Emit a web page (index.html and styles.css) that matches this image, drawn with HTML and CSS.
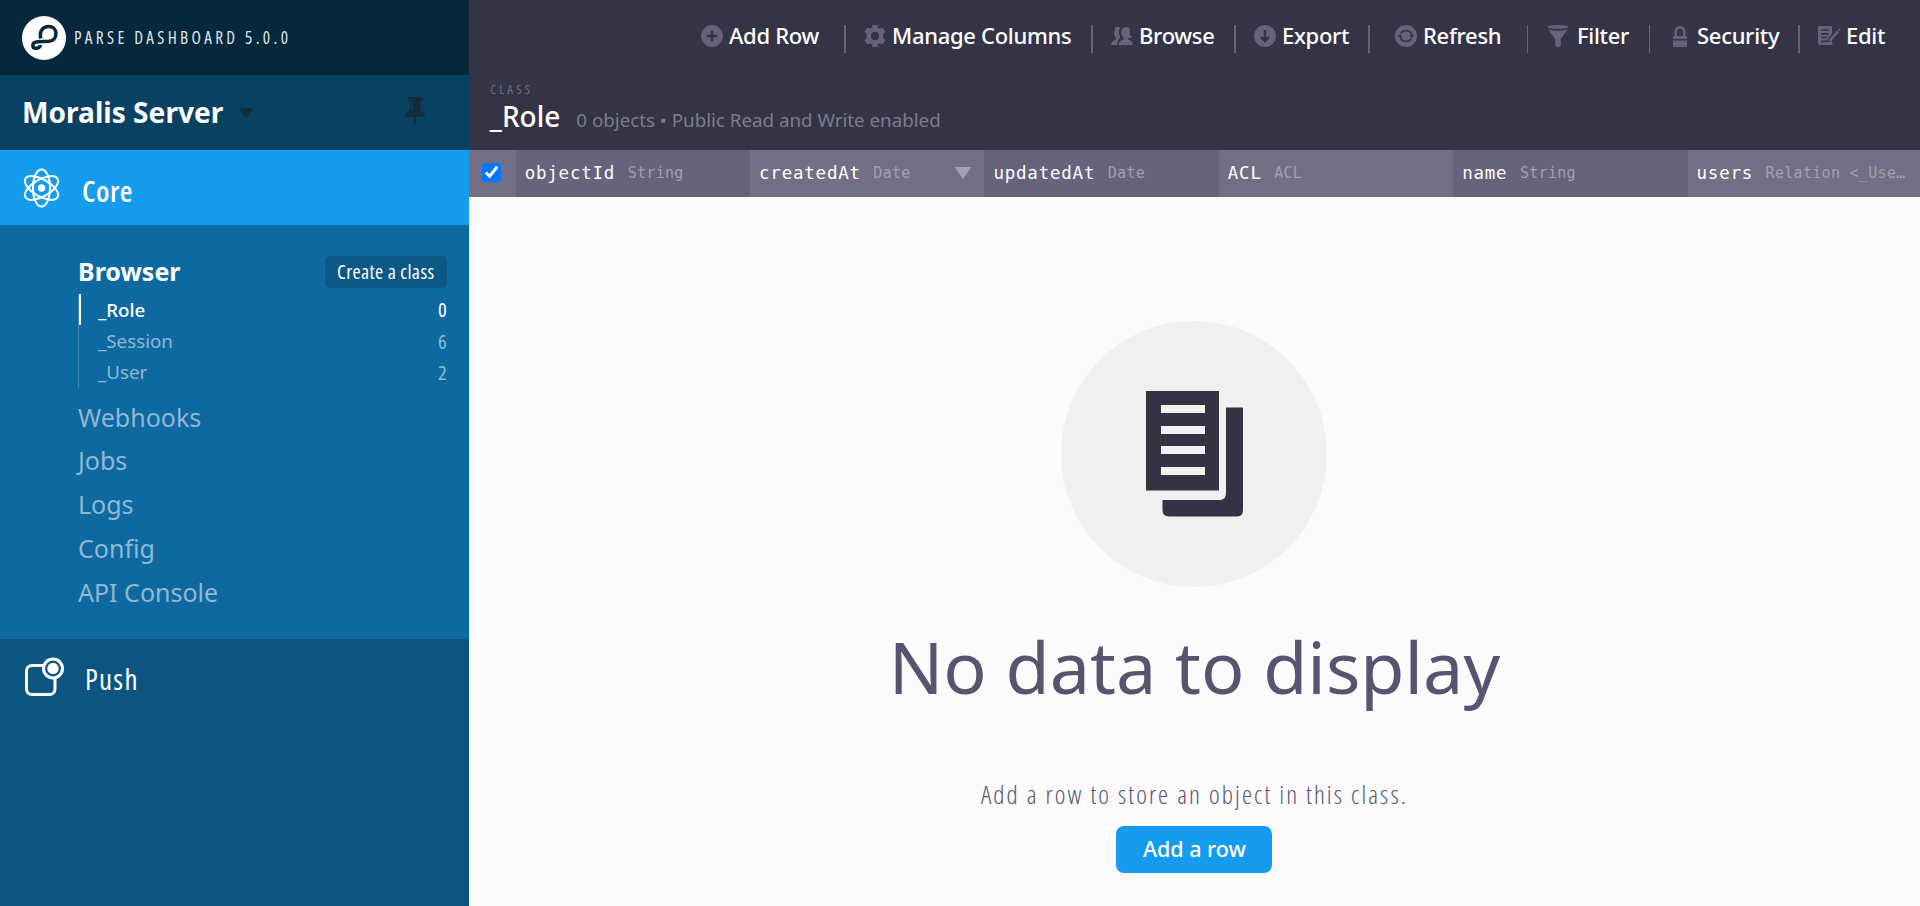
FILE: index.html
```html
<!DOCTYPE html>
<html lang="en">
<head>
<meta charset="utf-8">
<title>Parse Dashboard</title>
<link rel="stylesheet" href="styles.css">
</head>
<body>
<div class="app">
  <aside class="sidebar">
    <div class="brand">
      <svg class="brand-logo" viewBox="0 0 44 44"><circle cx="22" cy="22" r="22" fill="#fff"/><path d="M18.800 22.500C17 15 21 10.500 26.500 10.500C31 10.500 34 13.500 34 17.500C34 22 31 25 27 25.300L16 25.800C12.500 26 10.800 27.500 10.800 29.500C10.800 31.300 12.200 32.300 14 32.300C16.500 32.300 18.300 31 18.300 29" fill="none" stroke="#05283c" stroke-width="3.500"/></svg>
      <span class="brand-name">PARSE DASHBOARD 5.0.0</span>
    </div>
    <div class="app-picker">
      <span class="app-name">Moralis Server</span>
      <svg class="caret" viewBox="0 0 14 10"><path d="M0 0H14L7 10Z" fill="#132c3c"/></svg>
      <svg class="pin" viewBox="0 0 20 29"><path d="M4 0H16Q18 0 18 2T16 4.300L15.500 4.500V13.500Q20 15 20 20H11.200L10.500 28.500H9.500L8.900 20H0Q0 15 5 13.500V4.500Q2.500 4 2.500 2T4 0ZM6.500 5V13.500H8V5Z" fill="#132c3c" fill-rule="evenodd"/></svg>
    </div>
    <div class="section section-active">
      <svg class="section-icon" viewBox="0 0 36 40" fill="none" stroke="#fff" stroke-width="2"><circle cx="18" cy="20" r="3.700" fill="#fff" stroke="none"/><ellipse cx="18" cy="20" rx="8.600" ry="18.500"/><ellipse cx="18" cy="20" rx="8.600" ry="18.500" transform="rotate(60 18 20)"/><ellipse cx="18" cy="20" rx="8.600" ry="18.500" transform="rotate(-60 18 20)"/></svg>
      <span class="section-name">Core</span>
    </div>
    <nav class="menu">
      <div class="menu-item menu-current"><span>Browser</span><button class="create-class">Create a class</button></div>
      <div class="classes">
        <div class="class-row class-current"><span>_Role</span><span class="count">0</span></div>
        <div class="class-row"><span>_Session</span><span class="count">6</span></div>
        <div class="class-row"><span>_User</span><span class="count">2</span></div>
      </div>
      <div class="menu-item">Webhooks</div>
      <div class="menu-item">Jobs</div>
      <div class="menu-item">Logs</div>
      <div class="menu-item">Config</div>
      <div class="menu-item">API Console</div>
    </nav>
    <div class="section section-push">
      <svg class="section-icon" viewBox="0 0 39 40"><rect x="1.500" y="8.500" width="28.500" height="29" rx="5.500" fill="none" stroke="#fff" stroke-width="3"/><circle cx="28" cy="11.500" r="11" fill="#fff"/><circle cx="28" cy="11.500" r="6.800" fill="#fff" stroke="#0c5582" stroke-width="2.200"/></svg>
      <span class="section-name">Push</span>
    </div>
  </aside>
  <main class="content">
    <header class="header">
      <div class="toolbar">
        <div class="tool"><svg class="tool-icon" viewBox="0 0 22 22"><circle cx="11" cy="11" r="11"/><path class="cut" d="M11 5.500V16.500M5.500 11H16.500"/></svg><span>Add Row</span></div>
        <div class="tool"><svg class="tool-icon" viewBox="0 0 22 22"><path fill-rule="evenodd" d="M8.600 0H13.400L13.900 2.700L15.800 3.800L18.700 2.800L21.400 6.700L19.300 8.900V13.100L21.400 15.300L18.700 19.200L15.800 18.200L13.900 19.300L13.400 22H8.600L8.100 19.300L6.200 18.200L3.300 19.200L0.600 15.300L2.700 13.100V8.900L0.600 6.700L3.300 2.800L6.200 3.800L8.100 2.700ZM11 6.800A4.200 4.200 0 1 0 11 15.200A4.200 4.200 0 1 0 11 6.800Z"/></svg><span>Manage Columns</span></div>
        <div class="tool"><svg class="tool-icon" viewBox="0 0 22 22"><path d="M4 2.500Q6 1 9.500 2.500Q7 6 8.500 10Q9.500 12 9 13Q6.500 14.500 6.500 20H0Q0 16.500 5 14.500Q5.500 12.500 3.500 10.500Q2.500 7 3.700 5ZM11.500 3Q15 1 18.500 3Q19.500 6 18.500 9.500Q22 12 20 13H17L17.500 14.500Q22 16 22 20H7.500Q7.500 16 12.500 14.500V12.500Q10 10 10 7.500Z"/></svg><span>Browse</span></div>
        <div class="tool"><svg class="tool-icon" viewBox="0 0 22 22"><circle cx="11" cy="11" r="11"/><path class="cut" d="M11 5V15M7 12L11 16L15 12"/></svg><span>Export</span></div>
        <div class="tool tool-refresh"><svg class="tool-icon" viewBox="0 0 22 22"><circle cx="11" cy="11" r="11"/><path class="cut thin" d="M5.800 8.500A6 6 0 0 1 16.800 10M16.200 13.500A6 6 0 0 1 5.200 12"/><path class="hole" d="M14.300 10H19L16.900 13.200ZM3 12H7.700L5.100 8.800Z"/></svg><span>Refresh</span></div>
        <div class="tool tool-filter"><svg class="tool-icon" viewBox="0 0 22 22"><ellipse cx="11" cy="1.900" rx="10.500" ry="1.900"/><path d="M1.500 4.800Q11 6.500 20.500 4.800L13.800 14V21Q11 22.800 8.200 21V14Z"/></svg><span>Filter</span></div>
        <div class="tool tool-security"><svg class="tool-icon" viewBox="0 0 22 22"><path fill-rule="evenodd" d="M4 11H5.500V7Q5.500 1 11 1T16.500 7V11H18V14H4ZM8 11H14V7Q14 3.500 11 3.500T8 7ZM4 15.500H18V20.500Q18 22 16.500 22H5.500Q4 22 4 20.500Z"/></svg><span>Security</span></div>
        <div class="tool"><svg class="tool-icon" viewBox="0 0 22 22"><path d="M0 1H14V9L9 15V17H12L14 15V18L15 20H2Q0 20 0 18Z"/><path class="cut thin" d="M3 5H11M3 8.800H11M3 12.500H9M3 16.300H9"/><path d="M11 14.500L19 5.500L21 7.500L13 16L10.500 16.500ZM20 4.500L21 3.500L22.500 5L21.700 6.200Z"/></svg><span>Edit</span></div>
      </div>
      <div class="class-label">CLASS</div>
      <div class="title"><span class="class-name">_Role</span><span class="subtitle">0 objects • Public Read and Write enabled</span></div>
    </header>
    <div class="columns">
      <div class="check-cell"><input class="check" type="checkbox" checked></div>
      <div class="cell"><span>objectId</span><span class="type">String</span></div>
      <div class="cell cell-alt"><span>createdAt</span><span class="type">Date</span><svg class="sort" viewBox="0 0 18 13"><path d="M0 0H18L9 13Z" fill="#a1a2ad"/></svg></div>
      <div class="cell"><span>updatedAt</span><span class="type">Date</span></div>
      <div class="cell cell-alt"><span>ACL</span><span class="type">ACL</span></div>
      <div class="cell"><span>name</span><span class="type">String</span></div>
      <div class="cell cell-alt"><span>users</span><span class="type">Relation &lt;_Use…</span></div>
    </div>
    <div class="empty">
      <div class="empty-disc"><svg class="empty-icon" viewBox="0 0 97 126"><path fill="#343344" fill-rule="evenodd" d="M0 0H73V99.500H0ZM15 14V22H59V14ZM15 35V43H59V35ZM15 55V63H59V55ZM15 76V84H59V76ZM80 16.500H97V119Q97 125.500 91 125.500H23Q16.500 125.500 16.500 119V109H74Q80 109 80 102Z"/></svg></div>
      <h1 class="empty-title">No data to display</h1>
      <p class="empty-text">Add a row to store an object in this class.</p>
      <button class="add-row">Add a row</button>
    </div>
  </main>
</div>
</body>
</html>
```
FILE: styles.css
```css
* { box-sizing: border-box; }
body { margin: 0; font-family: "Noto Sans", sans-serif; }
button { border: 0; margin: 0; color: #fff; font-family: inherit; }
svg { display: block; flex: none; overflow: visible; }
.app { display: flex; width: 1920px; height: 906px; overflow: hidden; }

.sidebar { width: 468.750px; flex: none; background: #0c5582; color: #fff; }
.brand { height: 75px; background: #05283c; display: flex; align-items: center; padding-left: 22px; }
.brand-logo { width: 44px; height: 44px; }
.brand-name { margin: 0 0 1px 8px; font: 500 17.200px "Open Sans", sans-serif; font-stretch: 75%; letter-spacing: 3.350px; color: #dfe4e7; white-space: nowrap; }
.app-picker { height: 75px; background: #094162; display: flex; align-items: center; padding: 0 44px 0 22px; }
.app-name { font-size: 28.125px; font-weight: 700; margin-bottom: 1px; white-space: nowrap; }
.caret { width: 14px; height: 10px; margin-left: 16px; }
.pin { width: 20px; height: 29px; margin-left: auto; margin-bottom: 3px; }
.section { height: 75px; display: flex; align-items: center; font: 400 29px "Open Sans", sans-serif; }
.section-active { background: #169cee; font-weight: 600; font-stretch: 75%; letter-spacing: 0.500px; padding-left: 23px; }
.section-active .section-icon { width: 37px; height: 40px; margin-bottom: -1px; }
.section-active .section-name { margin: 6px 0 0 22px; }
.section-push { padding-left: 25px; font-weight: 500; font-stretch: 75%; letter-spacing: 1.300px; }
.section-push .section-icon { width: 39px; height: 40px; margin-bottom: -1px; }
.section-push .section-name { margin: 4px 0 0 21px; }
.menu { height: 414px; background: #0e69a1; padding: 24px 22px 25px 78px; font-size: 25px; color: #8fb9d3; }
.menu-item { height: 43.750px; display: flex; align-items: center; justify-content: space-between; white-space: nowrap; }
.menu-current { color: #fff; font-weight: 700; }
.create-class { width: 122px; height: 32px; border-radius: 5px; background: #0c5886; font: 400 19.800px "Open Sans", sans-serif; font-stretch: 75%; letter-spacing: 0.400px; margin-top: 2px; padding: 0; white-space: nowrap; }
.classes { border-left: 1px solid #3e87b4; margin: 1px 0 7.200px; font-size: 18.750px; }
.class-row { height: 31.250px; display: flex; align-items: center; justify-content: space-between; padding-left: 19px; }
.class-current { color: #fff; font-weight: 500; border-left: 2px solid #fff; padding-left: 17px; }
.count { font-family: "Open Sans", sans-serif; font-size: 20.500px; line-height: 24px; font-stretch: 75%; }

.content { flex: 1; min-width: 0; background: #fcfafb; }
.header { height: 150px; background: #353446; color: #fff; }
.toolbar { display: grid; grid-template-columns: 143px 247px 143px 134px 159px 122px 149px 122px; padding: 25px 0 0 232.250px; height: 80px; }
.tool { height: 28px; display: flex; align-items: flex-start; border-left: 2px solid #66637a; padding-left: 18px; font-size: 22px; font-weight: 500; line-height: 21px; letter-spacing: -0.3px; white-space: nowrap; }
.tool:first-child { border-left: 0; padding-left: 0; }
.tool-refresh { padding-left: 25px; }
.tool-filter, .tool-security { border-left-width: 1px; padding-left: 19px; }
.tool-icon { width: 22px; height: 22px; margin-right: 6px; fill: #66637a; }
.tool-filter .tool-icon { margin-right: 8px; }
.cut { fill: none; stroke: #353446; stroke-width: 2.500; }
.thin { stroke-width: 1.700; }
.hole { fill: #353446; }
.class-label { padding-left: 21.500px; font: 400 13px/18px "Open Sans", sans-serif; font-stretch: 75%; letter-spacing: 3.200px; color: #706e82; }
.title { padding-left: 21px; display: flex; align-items: baseline; line-height: 36px; white-space: nowrap; }
.class-name { font-size: 28px; font-weight: 500; }
.subtitle { margin-left: 16px; font-size: 18.750px; color: #7e7d8d; }

.columns { height: 47px; display: grid; grid-template-columns: 46.875px repeat(6, 234.375px); overflow: hidden; background: #66637a; }
.check-cell { background: #726f84; display: flex; align-items: center; padding-left: 13px; }
.check { width: 19px; height: 19px; margin: 0 0 2px; accent-color: #0075ff; }
.cell { display: flex; align-items: center; padding: 0 0 2px 9px; font: 400 17.500px "DejaVu Sans Mono", monospace; letter-spacing: 0.780px; color: #fff; white-space: nowrap; }
.cell-alt { background: #726f84; }
.type { margin-left: 12.500px; font-size: 15px; letter-spacing: 0.300px; color: #a1a2ad; }
.sort { width: 18px; height: 12px; margin-left: auto; margin-right: 12px; }

.empty { display: flex; flex-direction: column; align-items: center; padding-top: 124px; color: #56546f; }
.empty-disc { width: 266px; height: 266px; border-radius: 50%; background: #f1f0f1; display: flex; align-items: center; justify-content: center; }
.empty-icon { width: 97px; height: 126px; }
.empty-title { margin: 31px 0 0; font-size: 71.900px; font-weight: 400; line-height: 96px; white-space: nowrap; }
.empty-text { margin: 65px 0 0; font: 300 25.500px/30px "Open Sans", sans-serif; font-stretch: 75%; letter-spacing: 2.100px; white-space: nowrap; }
.add-row { margin-top: 17px; width: 156px; height: 47px; border-radius: 8px; background: #169cee; font-size: 21.500px; font-weight: 500; padding: 0 0 2px; }
```
